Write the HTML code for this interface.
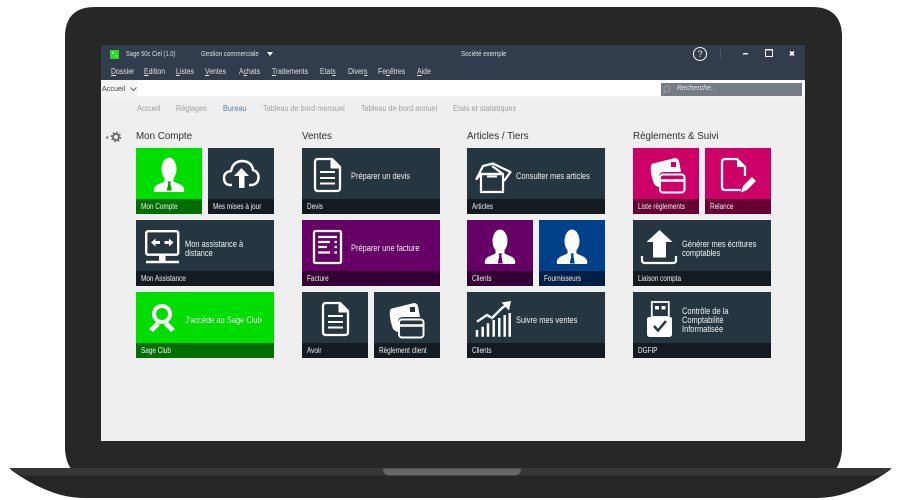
<!DOCTYPE html>
<html><head><meta charset="utf-8"><style>
html,body{margin:0;padding:0;background:#fff}
#p{position:relative;width:900px;height:500px;overflow:hidden;background:#fff;font-family:"Liberation Sans",sans-serif;filter:blur(.25px)}
#p svg.l{position:absolute;left:0;top:0}
.t{position:absolute;white-space:nowrap;line-height:10px;transform-origin:left center}
.m{font-size:8px;color:#dde0e4;top:67px;transform:scaleX(.86)}
.i{font-size:7.5px;color:#dde0e4;top:49px;transform:scaleX(.82)}
.b{font-size:8px;color:#a0a0a0;top:104px;transform:scaleX(.91)}
.h{font-size:9.8px;color:#2e2e2e;top:131px;line-height:12px}
.tile{position:absolute;height:66px}
.s{width:66px}.w{width:138px}
.f{position:absolute;left:0;right:0;bottom:0;height:15px;background:rgba(0,0,0,.5);color:#f0f0f0;font-size:8px;line-height:15px;padding-left:5px;box-sizing:border-box;white-space:nowrap}
.f span{display:inline-block;transform:scaleX(.8);transform-origin:left center}
.c{position:absolute;left:49px;color:#f0f2f4;font-size:9px;line-height:9px;white-space:nowrap;transform:scaleX(.83);transform-origin:left center}
.g{background:#00dd00}.d{background:#263640}.v{background:#660066}.n{background:#003f8a}.r{background:#cc0066}
u{text-decoration:underline}
</style></head><body><div id="p">
<svg class="l" width="900" height="500" viewBox="0 0 900 500">
<path d="M95 7H812Q842 7 842 37V450Q841 462 836 469H71Q66 462 65 450V37Q65 7 95 7Z" fill="#272727"/>
<path d="M10 468H891L890 470Q865 488 840 495Q828 498 815 498H86Q73 498 61 495Q36 488 11 470Z" fill="#262626"/>
<path d="M10 468H891L890 470L878 475.500H23L11 470Z" fill="#363636"/>
<path d="M383 468.500H521Q521 475 515 475.500H389Q383 475 383 468.500Z" fill="#666"/>
<rect x="101" y="45" width="704" height="396" fill="#efefef"/>
<rect x="101" y="45" width="704" height="35" fill="#323c4c"/>
<rect x="101" y="80" width="704" height="17" fill="#f4f4f4"/>
<rect x="137" y="80" width="667" height="16" fill="#fff"/>
<rect x="661" y="83" width="141" height="13" fill="#777b85"/>
<rect x="110" y="50" width="9" height="9" fill="#22dd22"/>
<path d="M112 52h2v2h-2zM115 55h2v2h-2z" fill="#aef5ae"/>
<path d="M267 52H273L270 56Z" fill="#fff"/>
<circle cx="700" cy="54" r="6.500" fill="none" stroke="#eee" stroke-width="1.100"/>
<rect x="720" y="49" width="1" height="10" fill="#4c5768"/>
<rect x="743" y="53" width="5" height="1.500" fill="#eee"/>
<rect x="765.500" y="49.500" width="7" height="7" fill="none" stroke="#eee"/><rect x="765" y="49" width="8" height="1.500" fill="#eee"/>
<path d="M790 51.500L794 55.500M794 51.500L790 55.500" stroke="#fff" stroke-width="1.700"/>
<path d="M130.500 87.500L133.500 90.500L136.500 87.500" stroke="#666" fill="none"/>
<circle cx="667" cy="89" r="3" fill="none" stroke="#9a9ea6"/><path d="M665 92L663 94" stroke="#9a9ea6"/>
<path d="M108 136L106.500 137.500L108 139" stroke="#666" fill="none"/>
<circle cx="116" cy="137" r="3" fill="none" stroke="#666" stroke-width="1.800"/><circle cx="116" cy="137" r="4.600" fill="none" stroke="#666" stroke-width="1.300" stroke-dasharray="1.800 1.800"/>
</svg>

<div class="t i" style="left:126px;transform:scaleX(.77)">Sage 50c Ciel (1.0)</div>
<div class="t i" style="left:201px">Gestion commerciale</div>
<div class="t i" style="left:461px">Société exemple</div>
<div class="t m" style="left:111px"><u>D</u>ossier</div>
<div class="t m" style="left:144px"><u>E</u>dition</div>
<div class="t m" style="left:176px"><u>L</u>istes</div>
<div class="t m" style="left:205px"><u>V</u>entes</div>
<div class="t m" style="left:239px">A<u>c</u>hats</div>
<div class="t m" style="left:272px"><u>T</u>raitements</div>
<div class="t m" style="left:320px">Etat<u>s</u></div>
<div class="t m" style="left:348px">Diver<u>s</u></div>
<div class="t m" style="left:378px">Fe<u>n</u>êtres</div>
<div class="t m" style="left:417px"><u>A</u>ide</div>
<div class="t" style="left:102px;top:84px;font-size:7.200px;color:#444">Accueil</div>
<div class="t" style="left:677px;top:84px;font-size:7px;font-style:italic;color:#e2e4e8">Recherche...</div>
<div class="t b" style="left:137px">Accueil</div>
<div class="t b" style="left:176px">Réglages</div>
<div class="t b" style="left:223px;color:#4a82b4">Bureau</div>
<div class="t b" style="left:263px">Tableau de bord mensuel</div>
<div class="t b" style="left:361px">Tableau de bord annuel</div>
<div class="t b" style="left:453px">Etats et statistiques</div>
<div class="t h" style="left:136px">Mon Compte</div>
<div class="t h" style="left:302px">Ventes</div>
<div class="t h" style="left:467px">Articles / Tiers</div>
<div class="t h" style="left:633px">Règlements &amp; Suivi</div>

<div class="tile s g" style="left:136px;top:148px"><div class="f"><span>Mon Compte</span></div></div>
<div class="tile s d" style="left:208px;top:148px"><div class="f"><span>Mes mises à jour</span></div></div>
<div class="tile w d" style="left:136px;top:220px"><div class="c" style="top:20px">Mon assistance à<br>distance</div><div class="f"><span>Mon Assistance</span></div></div>
<div class="tile w g" style="left:136px;top:292px"><div class="c" style="top:24px">J'accède au Sage Club</div><div class="f"><span>Sage Club</span></div></div>

<div class="tile w d" style="left:302px;top:148px"><div class="c" style="top:24px">Préparer un devis</div><div class="f"><span>Devis</span></div></div>
<div class="tile w v" style="left:302px;top:220px"><div class="c" style="top:24px">Préparer une facture</div><div class="f"><span>Facture</span></div></div>
<div class="tile s d" style="left:302px;top:292px"><div class="f"><span>Avoir</span></div></div>
<div class="tile s d" style="left:374px;top:292px"><div class="f"><span>Règlement client</span></div></div>

<div class="tile w d" style="left:467px;top:148px"><div class="c" style="top:24px">Consulter mes articles</div><div class="f"><span>Articles</span></div></div>
<div class="tile s v" style="left:467px;top:220px"><div class="f"><span>Clients</span></div></div>
<div class="tile s n" style="left:539px;top:220px"><div class="f"><span>Fournisseurs</span></div></div>
<div class="tile w d" style="left:467px;top:292px"><div class="c" style="top:24px">Suivre mes ventes</div><div class="f"><span>Clients</span></div></div>

<div class="tile s r" style="left:633px;top:148px"><div class="f"><span>Liste règlements</span></div></div>
<div class="tile s r" style="left:705px;top:148px"><div class="f"><span>Relance</span></div></div>
<div class="tile w d" style="left:633px;top:220px"><div class="c" style="top:20px">Générer mes écritures<br>comptables</div><div class="f"><span>Liaison compta</span></div></div>
<div class="tile w d" style="left:633px;top:292px"><div class="c" style="top:15px">Contrôle de la<br>Comptabilité<br>Informatisée</div><div class="f"><span>DGFIP</span></div></div>

<svg class="l" width="900" height="500" viewBox="0 0 900 500">
<defs>
<g id="person"><ellipse cx="33" cy="21" rx="7.500" ry="11.500" fill="#fff"/><path d="M18 44Q16.500 38 24 35.500L28.500 33.500V28H37.500V33.500L42 35.500Q49.500 38 48 44Z" fill="#fff"/></g>
<g id="doc" fill="none" stroke="#fff" stroke-width="2.300" stroke-linejoin="round"><path d="M4 1H18L26 9V30Q26 33 23 33H4Q1 33 1 30V4Q1 1 4 1Z"/><path d="M17 1V10H26L17 1Z" fill="#fff" stroke-width="1"/><path d="M6 14H21M6 20H21M6 25.500H21" stroke-width="2"/></g>
<g id="card"><path d="M1 8Q1 6 3 5.500L25 0Q28 0 29 3L31 14H14Q9 14 9 19V29Q4 28 3 23Q0 13 1 8Z" fill="#fff"/><rect x="21" y="4" width="5" height="5" fill="currentColor"/><rect x="10" y="16.500" width="24.500" height="18" rx="3" fill="none" stroke="#fff" stroke-width="2"/><path d="M10 22.500H34" stroke="#fff" stroke-width="2.500"/></g>
</defs>

<use href="#person" x="136" y="148"/><path d="M167.500 181.500h3.500l-.7 2 1.500 7h-5l1.500-7z" fill="#00a000"/>
<use href="#person" x="467" y="220"/><path d="M498.500 253.500h3.500l-.7 2 1.500 8h-5l1.500-8z" fill="#660066"/>
<use href="#person" x="539" y="220"/><path d="M570.500 253.500h3.500l-.7 2 1.500 8h-5l1.500-8z" fill="#003f8a"/>

<!-- cloud -->
<path d="M232 185H229Q224 184 224 178Q224 172 231 171Q233 161 243 161Q252 162 253 170Q259 172 258.500 178Q258 184 252 185H249" fill="none" stroke="#fff" stroke-width="2.400"/>
<path d="M241.500 168L249 176H244.500V188H239V176H234Z" fill="#fff"/>

<!-- monitor -->
<rect x="146.200" y="231.200" width="32" height="23.500" rx="2" fill="none" stroke="#fff" stroke-width="2.400"/>
<path d="M151 242.500L155.500 238.500V241H160V244H155.500V246.500ZM173.500 242.500L169 238.500V241H164.500V244H169V246.500Z" fill="#fff"/>
<rect x="159" y="255" width="6.500" height="6" fill="#fff"/><path d="M146 262H179" stroke="#fff" stroke-width="2.600"/>

<!-- medal -->
<circle cx="162" cy="314" r="8" fill="none" stroke="#fff" stroke-width="4"/>
<path d="M156 322L149 329L153 332L160 325ZM168 322L175 329L171 332L164 325Z" fill="#fff"/>

<use href="#doc" x="314" y="158"/>
<g fill="none" stroke="#fff"><rect x="314" y="231" width="27" height="32" rx="1.500" stroke-width="2.300"/><path d="M318 237H337M318 242H330M318 247H327M318 252.500H330" stroke-width="2.200"/><path d="M334.500 242h2.500M334.500 247h2.500M334.500 252.500h2.500" stroke-width="2.200"/></g>
<use href="#doc" x="322" y="302"/>
<use href="#card" x="389" y="303" color="#263640"/>

<!-- box -->
<g fill="none" stroke="#fff" stroke-width="2.200" stroke-linejoin="round"><rect x="481" y="174" width="22" height="18"/><path d="M481 174L476.500 179L483 166L493 163.500L500 167L510.500 172L504 181"/><path d="M481 174H503L492 166"/></g><rect x="487" y="175.500" width="10" height="2" fill="#fff"/>

<!-- chart -->
<path d="M477 321.700L487 315L492 318L502 308L507 304.500" fill="none" stroke="#fff" stroke-width="2.300"/><path d="M501.500 302.500L511 301L509 310.500Z" fill="#fff"/>
<path d="M477 330V336.700M482.700 326.700V336.700M488 323.300V336.700M493.700 320V336.700M499.300 318V336.700M504.700 315V336.700M509.700 313V336.700" stroke="#fff" stroke-width="2.500"/>

<use href="#card" x="650" y="158" color="#cc0066"/>

<!-- relance -->
<g fill="none" stroke="#fff" stroke-width="2.300"><path d="M741 190H725Q722 190 722 187V162Q722 159 725 159H737L745 167V176"/></g>
<path d="M737 159V167H745Z" fill="#fff"/>
<path d="M741 192.500L743 186L752 177L756 181L747 190Z" fill="#fff"/>

<!-- upload -->
<path d="M659.500 230L672.500 242H666V257.500H653V242H646.500Z" fill="#fff"/>
<path d="M642 256V260.500Q642 263 645 263H673Q676 263 676 260.500V256" fill="none" stroke="#fff" stroke-width="2.200"/>

<!-- usb -->
<rect x="651.800" y="302" width="17" height="15" fill="none" stroke="#fff" stroke-width="1.800"/>
<path d="M655 306h4v3.500h-4zM661.500 306h4v3.500h-4z" fill="#fff"/>
<path d="M650 317H670Q672 317 672 319V334Q672 337 669 337H650Q647 337 647 334V319Q647 317 650 317Z" fill="#fff"/>
<path d="M654 326L658 330.500L666 321" fill="none" stroke="#263640" stroke-width="2.500"/>
</svg>
<div class="t" style="left:697.500px;top:49px;font-size:9px;color:#eee">?</div>
</div></body></html>
